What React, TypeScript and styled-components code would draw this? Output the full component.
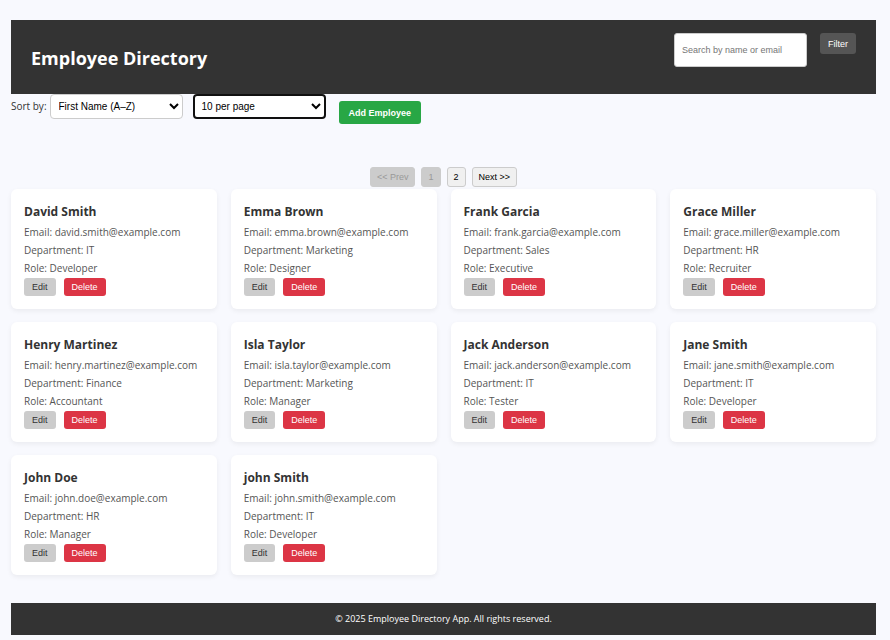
import React, { useState } from "react";
import styled, { createGlobalStyle, css } from "styled-components";

const GlobalStyle = createGlobalStyle`
  *, *::before, *::after { box-sizing: border-box; }
  body {
    margin: 0;
    background: #f8f9fe;
    color: #333;
    font-family: "Segoe UI", "Open Sans", "Noto Sans", sans-serif;
  }
  button, input, select { font-family: "Liberation Sans", Arial, sans-serif; font-size: 9px; }
`;

const Page = styled.div`
  padding: 20px 14px 5px 11px;
`;

const Header = styled.header`
  display: flex;
  justify-content: space-between;
  align-items: flex-start;
  min-height: 74px;
  padding: 13px 20px;
  background: #333;
  color: #fff;
`;

const Title = styled.h1`
  margin: 12px 0 0;
  font-size: 18px;
  line-height: 26px;
  font-weight: 700;
`;

const SearchForm = styled.form`
  display: flex;
  align-items: flex-start;
  gap: 13px;
`;

const SearchInput = styled.input`
  width: 133px;
  height: 34px;
  padding: 0 7px;
  border: 1px solid #ccc;
  border-radius: 3px;
  background: #fff;
  &::placeholder { color: #757575; }
`;

const FilterButton = styled.button`
  height: 21px;
  padding: 0 8px;
  border: 0;
  border-radius: 3px;
  background: #555;
  color: #fff;
`;

const Controls = styled.section`
  display: flex;
  align-items: flex-start;
  height: 73px;
`;

const SortLabel = styled.label`
  margin-right: 3px;
  font-size: 10px;
  line-height: 24px;
`;

const Select = styled.select<{ $active?: boolean }>`
  width: 133px;
  height: 25px;
  margin-right: 10px;
  padding: 0 4px;
  border: 1px solid #ccc;
  border-radius: 4px;
  background: #fff;
  color: #000;
  font-size: 10px;
  ${(p) => p.$active && css`
    margin-right: 13px;
    padding: 0 3px;
    border: 2px solid #101010;
  `}
`;

const AddButton = styled.button`
  height: 23px;
  margin-top: 7px;
  padding: 0 10px;
  border: 0;
  border-radius: 3px;
  background: #28a745;
  color: #fff;
  font-weight: 700;
`;

const Pagination = styled.nav`
  display: flex;
  justify-content: center;
  gap: 6px;
  margin-bottom: 2px;
`;

const PageButton = styled.button`
  height: 20px;
  padding: 0 6px;
  border: 1px solid #ccc;
  border-radius: 3px;
  background: #f0f0f0;
  color: #000;
  &:disabled { background: #ccc; color: #999; }
`;

const Grid = styled.main`
  display: grid;
  grid-template-columns: repeat(auto-fill, minmax(180px, 1fr));
  gap: 13px 14px;
`;

const Card = styled.article`
  padding: 13px;
  border-radius: 6px;
  background: #fff;
  box-shadow: 0 2px 5px rgba(0, 0, 0, 0.06);
`;

const Name = styled.h3`
  margin: 0 0 1px;
  font-size: 12px;
  line-height: 20px;
  font-weight: 700;
`;

const Detail = styled.p`
  margin: 0;
  color: #555;
  font-size: 10px;
  line-height: 18px;
`;

const Actions = styled.div`
  display: flex;
  gap: 8px;
  margin-top: 1px;
`;

const ActionButton = styled.button<{ $danger?: boolean }>`
  height: 18px;
  padding: 0 8px;
  border: 0;
  border-radius: 3px;
  background: ${(p) => (p.$danger ? "#dc3545" : "#ccc")};
  color: ${(p) => (p.$danger ? "#fff" : "#333")};
`;

const Footer = styled.footer`
  margin-top: 28px;
  background: #333;
  color: #fff;
  text-align: center;
  font-size: 9px;
  line-height: 32px;
`;

const employees = [
  ["David Smith", "david.smith@example.com", "IT", "Developer"],
  ["Emma Brown", "emma.brown@example.com", "Marketing", "Designer"],
  ["Frank Garcia", "frank.garcia@example.com", "Sales", "Executive"],
  ["Grace Miller", "grace.miller@example.com", "HR", "Recruiter"],
  ["Henry Martinez", "henry.martinez@example.com", "Finance", "Accountant"],
  ["Isla Taylor", "isla.taylor@example.com", "Marketing", "Manager"],
  ["Jack Anderson", "jack.anderson@example.com", "IT", "Tester"],
  ["Jane Smith", "jane.smith@example.com", "IT", "Developer"],
  ["John Doe", "john.doe@example.com", "HR", "Manager"],
  ["john Smith", "john.smith@example.com", "IT", "Developer"],
];

export default function App() {
  const [query, setQuery] = useState("");
  const shown = employees.filter(([name, email]) =>
    `${name} ${email}`.toLowerCase().includes(query.toLowerCase())
  );

  return (
    <>
      <GlobalStyle />
      <Page>
        <Header>
          <Title>Employee Directory</Title>
          <SearchForm onSubmit={(e) => e.preventDefault()}>
            <SearchInput
              type="text"
              aria-label="Search by name or email"
              placeholder="Search by name or email"
              value={query}
              onChange={(e) => setQuery(e.target.value)}
            />
            <FilterButton type="button">Filter</FilterButton>
          </SearchForm>
        </Header>
        <Controls>
          <SortLabel htmlFor="sort">Sort by:</SortLabel>
          <Select id="sort">
            <option>First Name (A–Z)</option>
          </Select>
          <Select $active aria-label="Employees per page">
            <option>10 per page</option>
          </Select>
          <AddButton type="button">Add Employee</AddButton>
        </Controls>
        <Pagination aria-label="Pagination">
          <PageButton disabled>&lt;&lt; Prev</PageButton>
          <PageButton disabled>1</PageButton>
          <PageButton>2</PageButton>
          <PageButton>Next &gt;&gt;</PageButton>
        </Pagination>
        <Grid>
          {shown.map(([name, email, department, role]) => (
            <Card key={email}>
              <Name>{name}</Name>
              <Detail>Email: {email}</Detail>
              <Detail>Department: {department}</Detail>
              <Detail>Role: {role}</Detail>
              <Actions>
                <ActionButton type="button">Edit</ActionButton>
                <ActionButton type="button" $danger>Delete</ActionButton>
              </Actions>
            </Card>
          ))}
        </Grid>
        <Footer>© 2025 Employee Directory App. All rights reserved.</Footer>
      </Page>
    </>
  );
}
